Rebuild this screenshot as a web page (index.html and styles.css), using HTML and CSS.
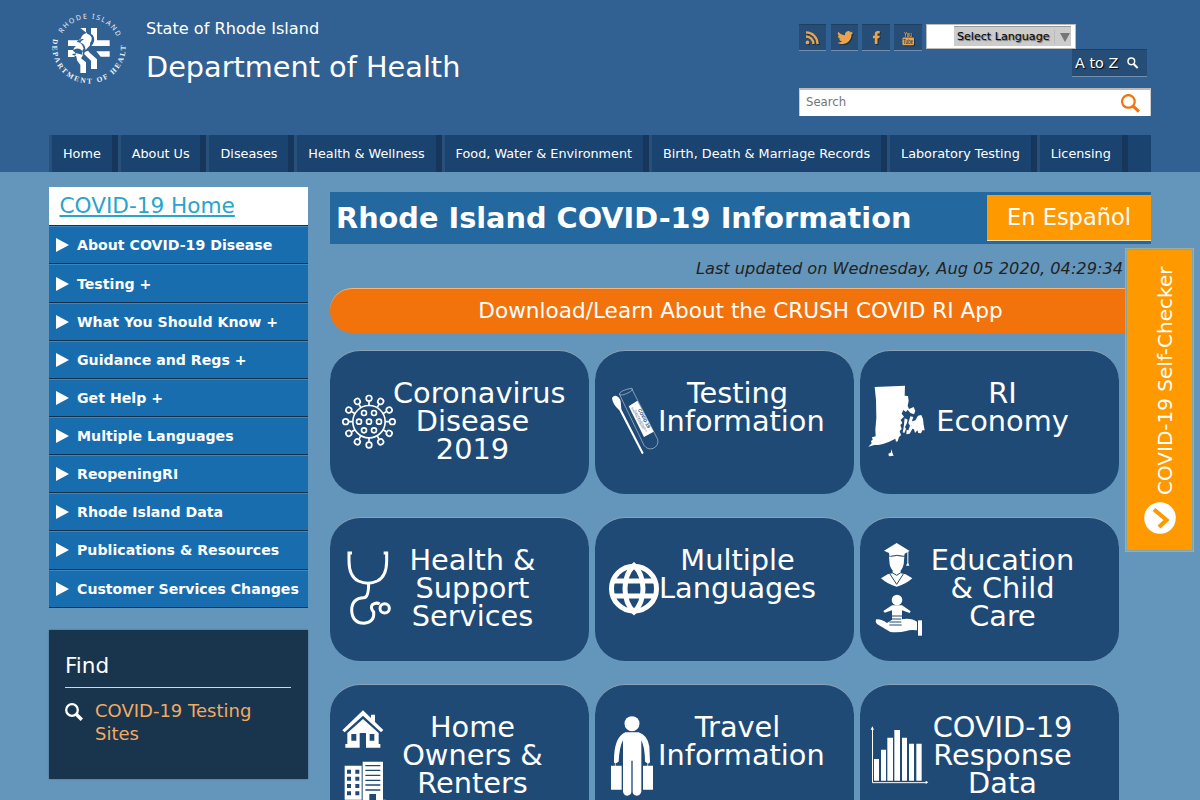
FILE: index.html
```html
<!DOCTYPE html>
<html lang="en">
<head>
<meta charset="utf-8">
<title>Rhode Island COVID-19 Information</title>
<link rel="stylesheet" href="styles.css">
</head>
<body>
<header class="header">
  <div class="wrap header-top">
    <svg class="logo" viewBox="30 27 234 240">
      <path id="ring-top" fill="none" d="M55 168A93 93 0 1 1 237 168"/>
      <path id="ring-bottom" fill="none" d="M40 115A110 110 0 1 0 256 125"/>
      <text class="logo-sans"><textPath href="#ring-top" startOffset="70" textLength="202" lengthAdjust="spacing">RHODE ISLAND</textPath></text>
      <text class="logo-serif"><textPath href="#ring-bottom" startOffset="1" textLength="396" lengthAdjust="spacing">DEPARTMENT OF HEALTH</textPath></text>
      <g fill="#fff">
        <path d="M121 84h17v16q-13 3-17 21H84v17h24q-7 5-8 12H84v21h19l5-9q-3-8-10-10q10-10 22-5q12 6 8 20l-5 8 15 12v32h-17v-24l-10-14-2-12-12-5v-2l12-2 18 4q-2-14 4-18l-3-8q-6-12-18-12 8-12 24-8l12-6q-3-14-10-16z"/>
        <path d="M153 84h18v37h38v17h-55q11-12 8-25-3-10-9-11z"/>
        <path d="M128 110q8-12 20-6 10 6 6 18-6 8-4 14l-13 14-2-9q-4-12-14-13 2-8 10-9z"/>
        <path d="M169 154h40v16h-27z"/>
        <path d="M133 158q4-6 12-5l4 5 22 20v29h-18v-25l-20-19z"/>
      </g>
    </svg>
    <div class="brand">
      <div class="state">State of Rhode Island</div>
      <div class="dept">Department of Health</div>
    </div>
    <div class="tools">
      <div class="social">
        <a class="sq"><svg viewBox="0 0 27 27"><g class="glyph-line"><path d="M6.500 12.400a8 8 0 0 1 8 8M6.500 8a12.500 12.500 0 0 1 12.500 12.400"/></g><circle class="glyph" cx="8.100" cy="18.800" r="2"/></svg></a>
        <a class="sq"><svg viewBox="0 0 24 24"><path class="glyph" transform="translate(5 4.500) scale(.64)" d="M24 4.600a10 10 0 0 1-2.800.8 5 5 0 0 0 2.200-2.700c-1 .6-2 1-3.100 1.200a4.900 4.900 0 0 0-8.400 4.500A14 14 0 0 1 1.700 3.200a4.900 4.900 0 0 0 1.500 6.500 5 5 0 0 1-2.200-.6v.1a4.900 4.900 0 0 0 3.900 4.800 5 5 0 0 1-2.200.1 4.900 4.900 0 0 0 4.600 3.400A9.900 9.900 0 0 1 0 19.500a14 14 0 0 0 7.500 2.200c9.100 0 14-7.500 14-14v-.6A10 10 0 0 0 24 4.600z"/></svg></a>
        <a class="sq wide"><svg viewBox="0 0 28 27"><path class="glyph" d="M12.700 20.600v-6.400h-2v-2.600h2V9.800c0-2.200 1.300-3.200 3.300-3.200h2v2.600h-1.300c-.9 0-1.100.4-1.100 1.100v1.300H18l-.4 2.600h-2v6.400z"/></svg></a>
        <a class="sq wide"><svg viewBox="0 0 28 27"><rect class="glyph" x="8" y="13.500" width="12.500" height="8.500" rx="1.500"/><text class="yt-you" x="10" y="12.500" textLength="8" lengthAdjust="spacingAndGlyphs">You</text><text class="yt-tube" x="9" y="20.500" textLength="10.500" lengthAdjust="spacingAndGlyphs">Tube</text></svg></a>
        <div class="lang"><div class="lang-in"><span class="lang-label">Select Language</span><span class="lang-arrow"></span></div></div>
      </div>
      <a class="atoz"><span>A to Z</span><svg class="atoz-icon" viewBox="0 0 18 18"><circle cx="6.500" cy="6.500" r="5" fill="none" stroke="#fff" stroke-width="2.200"/><path d="M10 10.500l6 6" stroke="#fff" stroke-width="3"/></svg></a>
      <div class="search"><span>Search</span><svg class="search-icon" viewBox="0 0 18 18"><circle cx="7" cy="7" r="6" fill="none" stroke="#f4740b" stroke-width="2.100"/><path d="M11.500 11.500l5.500 5.200" stroke="#f4740b" stroke-width="3"/></svg></div>
    </div>
  </div>
  <nav class="wrap nav">
    <a>Home</a><a>About Us</a><a>Diseases</a><a>Health &amp; Wellness</a><a>Food, Water &amp; Environment</a><a>Birth, Death &amp; Marriage Records</a><a>Laboratory Testing</a><a>Licensing</a>
  </nav>
</header>
<div class="wrap body">
  <aside class="side">
    <div class="side-home"><a>COVID-19 Home</a></div>
    <ul class="menu">
      <li>About COVID-19 Disease</li><li>Testing +</li><li>What You Should Know +</li><li>Guidance and Regs +</li><li>Get Help +</li><li>Multiple Languages</li><li>ReopeningRI</li><li>Rhode Island Data</li><li>Publications &amp; Resources</li><li>Customer Services Changes</li>
    </ul>
    <section class="find">
      <h2>Find</h2>
      <div class="find-row">
        <svg class="find-icon" viewBox="0 0 18 18"><circle cx="7" cy="7" r="5.800" fill="none" stroke="#fff" stroke-width="2.300"/><path d="M11.300 11.300l5.500 5.500" stroke="#fff" stroke-width="3.400"/></svg>
        <a>COVID-19 Testing Sites</a>
      </div>
    </section>
  </aside>
  <main class="main">
    <div class="title"><h1>Rhode Island COVID-19 Information</h1><a class="espanol">En Español</a></div>
    <p class="updated">Last updated on Wednesday, Aug 05 2020, 04:29:34</p>
    <a class="crush">Download/Learn About the CRUSH COVID RI App</a>
    <div class="cards">
      <a class="card">
        <svg class="icon" viewBox="15 31 210 429"><g fill="none" stroke="#fff" stroke-width="5">
          <circle cx="132" cy="246" r="48.500"/>
          <g id="spikes"><path d="M132 197v-11M132 295v11M83 246H72M181 246h11"/><circle cx="132" cy="176" r="8.500"/><circle cx="132" cy="316" r="8.500"/><circle cx="62" cy="246" r="8.500"/><circle cx="202" cy="246" r="8.500"/></g>
          <use href="#spikes" transform="rotate(30 132 246)"/><use href="#spikes" transform="rotate(60 132 246)"/>
          <circle cx="132" cy="246" r="7.500"/><circle cx="102" cy="246" r="7.500"/><circle cx="162" cy="246" r="7.500"/><circle cx="117" cy="220" r="7.500"/><circle cx="147" cy="220" r="7.500"/><circle cx="117" cy="272" r="7.500"/><circle cx="147" cy="272" r="7.500"/>
        </g></svg>
        <span>Coronavirus Disease 2019</span>
      </a>
      <a class="card">
        <svg class="icon" viewBox="15 31 210 429">
          <path d="M66 176q2-8 11-8 12 3 15 17l2 24 67 131-5 4-68-132q-20-17-22-36z" fill="#fff"/>
          <g fill="none" stroke="#dfe7ee" stroke-width="1.600"><path d="M88 163q3-11 36-17q8 1-3 10q-28 16-33 7l74 154q11 15 28 9 17-9 13-27L125 147"/></g>
          <path d="M116 200l26-17 49 93-29 16z" fill="#fff"/>
          <text class="tube-bold" transform="translate(143 210) rotate(62)">COVID-19</text>
          <text class="tube-small" transform="translate(133 212) rotate(62)">Specimen Collection</text>
          <text class="tube-small" transform="translate(123 204) rotate(62)">Specimen Collection</text>
        </svg>
        <span>Testing Information</span>
      </a>
      <a class="card">
        <svg class="icon" viewBox="15 31 210 429"><g fill="#fff">
          <path d="M59 142L150 138 149 168 159 169 161 184 158 198 162 208 176 202 181 214 177 224 166 220 158 210 153 217 145 211 140 222 147 231 137 240 142 250 136 256 140 268 134 274 138 287 132 292 128 305 123 306 121 297 101 307 84 313 70 316 58 316 40 321 50 311 48 304 53 300 51 293 62 290 61 270 64 235 63 180z"/>
          <path d="M189 228L199 226 204 238 206 256 209 272 202 272 198 281 190 280 187 272 180 280 177 269 165 266 171 257 167 247 181 242z"/>
          <path d="M166 230l9 2-4 12 6 6-7 8 2 10-8 14-6 1 3-14 4-11-5-8zM149 236l9 4-3 12-5 10 3 6-5 12-5-2 3-15zM155 270l7 3-2 10-6 1z"/>
          <path d="M110 329l2 10 4 9-14 2-2-8 7-3z"/>
        </g></svg>
        <span>RI Economy</span>
      </a>
      <a class="card">
        <svg class="icon" viewBox="15 532 210 429"><g fill="none" stroke="#fff" stroke-width="9">
          <path d="M81 640h-9v24q0 46 28 60 29 13 57 0 28-14 28-60v-24h-9"/>
          <path d="M131 730q0 44-14 44-37 1-37 38 2 38 37 39 33-4 29-34-11-12-4-22 12-8 22-2"/>
          <circle cx="179" cy="806" r="14"/>
        </g></svg>
        <span>Health &amp; Support Services</span>
      </a>
      <a class="card">
        <svg class="icon" viewBox="15 532 210 429"><g fill="none" stroke="#fff" stroke-width="15">
          <circle cx="132" cy="747" r="67.500"/><path d="M72 724h120M72 769h120"/><path d="M132 677c-36 34-36 106 0 140c36-34 36-106 0-140z"/>
        </g></svg>
        <span>Multiple Languages</span>
      </a>
      <a class="card">
        <svg class="icon" viewBox="15 532 210 429"><g fill="#fff">
          <path d="M87 633l38-23 39 24-15 8-2 10q-22-6-43 0l-2-12z"/><path d="M157 636h3v34l3 8h-10l4-8z"/>
          <path d="M102 652q23-6 46 0l-2 22q-4 22-21 24-17-2-21-24zM113 693h24v8l15 3 20 12q-21 19-47 25-26-6-47-25l20-12 15-3z"/>
          <circle cx="126" cy="781" r="16"/><path d="M111 797h30l26 18-3 5-23-8v32h-30v-32l-22 7-4-5z"/>
          <path d="M64 839q14-2 32 11l14-9q18 4 28-2 30-6 48 7v26q-20-3-32 2-22 6-48 3l-40-24q-4-5-4-10z"/><path d="M189 842h12v46h-12z"/>
        </g><g fill="none" stroke="#1f4a75" stroke-width="3"><path d="M106 650q20-6 41 0M105 703l20 31 20-31M112 699l13 8 12-8M103 847h36M103 856h37M111 829h30M111 838h28"/></g></svg>
        <span>Education &amp; Child Care</span>
      </a>
      <a class="card">
        <svg class="icon" viewBox="15 43 210 429"><g fill="#fff">
          <path d="M52 182l62-60 24 23v-10h12v22l25 24-7 7-54-50-55 50z"/>
          <path d="M67 190l47-42 47 42v33h5v11h-43v-44h-19v44H61v-11h6z"/>
          <path d="M59 288h51v102H59zM113 276h61v114h8v30h-69z"/>
        </g><g fill="#1f4a75"><path d="M79 193h15v20H79zM134 193h14v20h-14z"/><path d="M66 300h12v12H66zM91 300h12v12H91zM66 321h12v12H66zM91 321h12v12H91zM66 343h12v12H66zM91 343h12v12H91zM66 365h12v12H66zM91 365h12v12H91z"/><path d="M121 286h45v4h-45zM121 300h45v4h-45zM121 315h45v4h-45zM121 330h45v4h-45zM121 344h45v4h-45zM121 359h45v4h-45zM133 373h20v20h-20z"/></g></svg>
        <span>Home Owners &amp; Renters</span>
      </a>
      <a class="card">
        <svg class="icon" viewBox="15 43 210 429"><g fill="#fff">
          <circle cx="126" cy="162" r="22.500"/>
          <path d="M106 188h40q26 8 32 42l2 46q-2 8-8 5l-7-5q0-42-11-64v154q-4 12-14 12t-12-10v-95h-4v95q-2 10-12 10t-13-12V212q-11 20-13 64l-8 5q-8 1-6-9 0-69 34-84z"/>
          <path d="M63 288h32v72H63zM159 288h30v72h-30z"/>
        </g><g stroke="#fff" stroke-width="2"><path d="M76 276v14M173 276v14"/></g></svg>
        <span>Travel Information</span>
      </a>
      <a class="card">
        <svg class="icon" viewBox="15 43 210 429"><g fill="#fff">
          <path d="M57 268h15v65H57zM78 240h15v93H78zM97 204h17v129H97zM118 181h17v152h-17zM141 204h15v129h-15zM162 222h15v111h-15zM184 222h16v111h-16z"/>
          <path d="M47 180l5-10 5 10zM212 333l8 5-8 5z"/>
        </g><path d="M52.500 174v165H216" fill="none" stroke="#fff" stroke-width="3"/></svg>
        <span>COVID-19 Response Data</span>
      </a>
    </div>
  </main>
</div>
<a class="checker"><span class="checker-text">COVID-19 Self-Checker</span><svg class="checker-icon" viewBox="0 0 32 32"><circle cx="16" cy="16" r="15.800" fill="#fff"/><path d="M10 7.500L22.500 18l-7.500 7" fill="none" stroke="#f90" stroke-width="4.200"/></svg></a>
</body>
</html>
```
FILE: styles.css
```css
* { box-sizing: border-box; }
html, body { overflow: hidden; height: 800px; }
body { margin: 0; background: #6496bc; color: #fff; font-family: "DejaVu Sans", sans-serif; font-size: 16px; }
h1, h2, p, ul { margin: 0; padding: 0; }
ul { list-style: none; }
.wrap { width: 1102px; margin-left: 49px; }

.header { height: 172px; background: #306192; }
.header-top { height: 135px; display: flex; }
.logo { width: 78px; height: 80px; margin: 9px 0 0 1px; flex: none; overflow: visible; }
.logo-sans { font: 21px "Noto Sans", sans-serif; fill: #e6edf3; }
.logo-serif { font: bold 22px "Liberation Serif", serif; fill: #f0f4f8; }
.brand { margin-left: 18px; width: 653px; flex: none; }
.state { margin-top: 19px; font-size: 16.15px; line-height: 19px; }
.dept { margin-top: 12px; font-size: 28.75px; line-height: 34px; }
.tools { width: 352px; padding-top: 24px; }
.social { display: flex; height: 25px; gap: 4px; align-items: flex-start; }
.sq { width: 27px; height: 27px; flex: none; background: #264d75; border-top: 1px solid #1f3f60; border-bottom: 1px solid #718fae; }
.sq + .sq { margin-left: 1px; }
.sq + .sq.wide { width: 28px; margin-left: 0; }
.sq svg { display: block; width: 100%; height: 25px; filter: drop-shadow(1px 1px 0 rgba(0,0,0,.4)); }
.glyph { fill: #eba44e; }
.glyph-line { fill: none; stroke: #eba44e; stroke-width: 2.6; }
.yt-you { font: bold 7px "Liberation Sans", sans-serif; fill: #eba44e; }
.yt-tube { font: bold 7px "Liberation Sans", sans-serif; fill: #264d75; }
.lang { width: 150px; height: 25px; flex: none; background: #fff; border: 1px solid #bbb; padding: 1px 4px 0 27px; }
.lang-in { height: 20px; background: #ccc; border-top: 1px solid #999; display: flex; align-items: center; color: #000; font-size: 11.1px; padding-left: 3px; text-shadow: 1px 1px 1px rgba(0,0,0,.5); }
.lang-label { width: 98px; height: 14px; line-height: 14px; border-right: 1px solid #bbb; white-space: nowrap; }
.lang-arrow { margin: 2px 0 0 5px; border: 5px solid transparent; border-top: 9px solid #767676; border-bottom: 0; }
.atoz { width: 75px; height: 28px; margin-left: 273px; background: #264d75; border-top: 1px solid #1f3f60; border-bottom: 1px solid #718fae; display: flex; align-items: center; padding-left: 3px; font-size: 14.4px; text-shadow: 1px 1px 1px #000; white-space: nowrap; }
.atoz-icon { width: 12px; height: 12px; margin-left: 9px; }
.search { margin-top: 11px; height: 28px; background: #fff; border: 1px solid #ccc; border-top: 2px solid #bbb; border-bottom: 0; display: flex; align-items: center; justify-content: space-between; padding: 0 10px 2px 6px; color: #757575; font-size: 11.7px; }
.search-icon { width: 19px; height: 19px; margin-top: 2px; }
.nav { height: 37px; display: flex; background: #1b436f; }
.nav a { border-left: 3px solid #285078; border-right: 6px solid #16375b; padding: 0 10.88px 0 11px; font-size: 12.8px; line-height: 37px; white-space: nowrap; }

.body { display: flex; gap: 22px; }
.side { width: 259px; flex: none; padding-top: 15px; }
.side-home { height: 38px; background: #fff; color: #2aa4cb; font-size: 21.6px; line-height: 37px; padding-left: 10.5px; }
.side-home a { text-decoration: underline; }
.menu { border-top: 1px solid #16304c; }
.menu li { height: 38.15px; border-top: 1px solid #3c86c0; border-bottom: 1px solid #16304c; background: #186daf; display: flex; align-items: center; gap: 8px; padding-left: 7px; font-size: 14.15px; font-weight: bold; white-space: nowrap; }
.menu li:first-child { height: 38.45px; }
.menu li::before { content: ""; border: 7px solid transparent; border-left: 13px solid #fff; border-right: 0; }
.find { margin-top: 22px; height: 149px; background: #19344d; padding: 21px 17px 0 16px; box-shadow: 0 0 2px rgba(0,0,0,.3); }
.find h2 { font-size: 21.6px; font-weight: normal; line-height: 30px; height: 37px; border-bottom: 1px solid #d0d6db; }
.find-row { display: flex; gap: 12px; margin-top: 11px; color: #f1ab62; font-size: 18px; line-height: 23px; }
.find-icon { width: 18px; height: 18px; margin-top: 4px; flex: none; }

.main { width: 821px; padding-top: 20px; flex: none; }
.title { height: 52px; background: #2369a0; display: flex; justify-content: space-between; padding: 3px 0 0 6px; }
.title h1 { font-size: 28.75px; line-height: 46px; white-space: nowrap; }
.espanol { width: 164px; height: 46px; background: #f90; border-bottom: 1px solid #f3dfbb; text-align: center; font-size: 22.5px; line-height: 44px; }
.updated { height: 44px; padding: 15px 28px 0 0; text-align: right; font-style: italic; font-size: 16.2px; line-height: 19px; color: #222; }
.crush { display: block; height: 45px; border-radius: 22px; background: #f2730c; border-top: 1px solid #ffb36e; text-align: center; font-size: 21.6px; line-height: 43px; }
.cards { display: grid; grid-template-columns: repeat(3, 259px); column-gap: 6px; row-gap: 23px; margin-top: 17px; }
.card { display: flex; height: 144px; border-radius: 30px; background: #1f4a75; border-top: 1px solid #8ba2b8; }
.card .icon { width: 70px; height: 143px; flex: none; margin: -1px -7px 0 0; }
.card span { width: 159px; margin-top: 28px; text-align: center; font-size: 28.8px; line-height: 28px; }
.tube-bold { font: bold 14px "Liberation Sans", sans-serif; fill: #1f4a75; }
.tube-small { font: 8px "Liberation Sans", sans-serif; fill: #1f4a75; }

.checker { position: fixed; left: 1125px; top: 248px; width: 69px; height: 304px; border: 1px solid #9fae97; outline: 1px solid #83a3a7; outline-offset: -2px; padding: 2px; background: #6496bc; z-index: 1; }
.checker::before { content: ""; position: absolute; inset: 1px; background: #f90; z-index: -1; }
.checker-text { display: block; writing-mode: vertical-rl; transform: rotate(180deg); height: 232px; margin: 12px 0 0 25px; width: 24px; line-height: 24px; font-size: 20px; white-space: nowrap; }
.checker-icon { display: block; width: 32px; height: 32px; margin: 7px 0 0 16px; }
```
